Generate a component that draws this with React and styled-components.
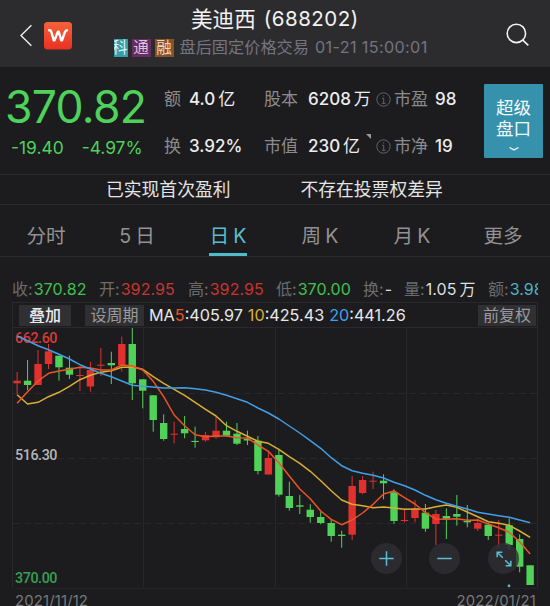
import React from "react";
import styled, { createGlobalStyle } from "styled-components";

const GlobalStyle = createGlobalStyle`
  * { box-sizing: border-box; }
  body { margin: 0; background: #1c1c1e; overflow: hidden; }
`;

const Screen = styled.main`
  width: 550px;
  height: 606px;
  overflow: hidden;
  display: flex;
  flex-direction: column;
  background: #1c1c1e;
  color: #ededef;
  font-family: Inter, "Noto Sans CJK SC", sans-serif;
  white-space: nowrap;
  font-size: 16px;
  line-height: 1;
`;

const Header = styled.header`
  height: 68px;
  flex: none;
  display: grid;
  grid-template-columns: 114px 1fr 64px;
  background: #2c2c2e;
  border-bottom: 1px solid #19191a;
`;

const HeaderLeft = styled.div`
  display: flex;
  align-items: flex-start;
  gap: 11px;
  padding: 22px 0 0 19px;
`;

const HeaderCenter = styled.div`
  display: flex;
  flex-direction: column;
`;

const Title = styled.h1`
  margin: 0;
  height: 38px;
  padding: 1px 0 0 77px;
  line-height: 36px;
  font-weight: 400;
  font-size: 21.6px;
  color: #f2f2f3;
  display: flex;
  gap: 8px;
`;

const Code = styled.span`
  font-size: 20.5px;
  letter-spacing: 0.5px;
`;

const SubTitle = styled.div`
  display: flex;
  align-items: center;
  height: 19px;
  color: #747480;
  font-size: 16.2px;
`;

const Tag = styled.span`
  width: ${(p) => p.$w}px;
  height: 18px;
  margin-right: 4px;
  display: flex;
  justify-content: ${(p) => (p.$clip ? "flex-end" : "center")};
  align-items: center;
  overflow: hidden;
  font-size: 15.5px;
  color: ${(p) => p.$fg};
  background: ${(p) => p.$bg};
`;

const Run = styled.span`
  color: ${(p) => p.$c || "inherit"};
  letter-spacing: ${(p) => p.$ls || 0}px;
  margin-left: ${(p) => p.$ml || 0}px;
`;

const SearchWrap = styled.div`
  padding: 22px 0 0 18px;
`;

const Summary = styled.section`
  height: 106px;
  flex: none;
  display: grid;
  grid-template-columns: 164px 100px 112px 108px 59px;
`;

const PriceBlock = styled.div`
  padding: 15px 0 0 5px;
  color: #4fd25b;
`;

const Price = styled.div`
  font-size: 44.5px;
  line-height: 48px;
  letter-spacing: -0.7px;
`;

const Change = styled.div`
  display: flex;
  gap: 18px;
  padding: 7px 0 0 6px;
  line-height: 20px;
  font-size: 17.4px;
`;

const StatColumn = styled.div`
  display: flex;
  flex-direction: column;
  padding-top: 19px;
  gap: 23px;
`;

const Stat = styled.div`
  display: flex;
  align-items: center;
  height: 24px;
  line-height: 24px;
  font-size: 17px;
`;

const StatLabel = styled.span`
  color: #8b8b8d;
  margin-right: ${(p) => p.$gap || 8}px;
`;

const StatValue = styled.span`
  display: flex;
  gap: 3px;
  font-weight: 500;
  font-size: 17px;
`;

const Unit = styled.span`
  font-weight: 400;
`;

const InfoSvg = styled.svg`
  margin-right: 3px;
  flex: none;
`;

const Corner = styled.i`
  align-self: flex-start;
  margin: 0 0 0 6px;
  border-style: solid;
  border-width: 0 5px 5px 0;
  border-color: transparent #9b9b9d transparent transparent;
`;

const SuperButton = styled.button`
  margin: 16px 0 0;
  width: 59px;
  height: 74px;
  border: 0;
  border-radius: 1px;
  padding: 13px 0 0;
  background: #3692ac;
  color: #f4fafc;
  font: 400 17.5px/21px Inter, "Noto Sans CJK SC", sans-serif;
  display: flex;
  flex-direction: column;
  align-items: center;
`;

const Notices = styled.section`
  height: 31px;
  flex: none;
  border-top: 1px solid #2b2b2d;
  border-bottom: 1px solid #2b2b2d;
  display: flex;
  gap: 70px;
  padding-left: 106px;
  font-size: 17.8px;
  line-height: 29px;
  color: #e4e4e6;
`;

const Tabs = styled.nav`
  height: 52px;
  flex: none;
  display: flex;
  border-bottom: 1px solid #2b2b2d;
`;

const Tab = styled.div`
  margin-left: ${(p) => p.$ml}px;
  width: ${(p) => p.$w}px;
  height: 51px;
  display: flex;
  gap: 4px;
  justify-content: center;
  line-height: 63px;
  font-size: 19.6px;
  color: ${(p) => (p.$active ? "#58bfcf" : "#929294")};
  border-bottom: 3px solid ${(p) => (p.$active ? "#4fbdcc" : "transparent")};
`;

const Quotes = styled.section`
  height: 45px;
  flex: none;
  width: 538px;
  overflow: hidden;
  display: flex;
  padding: 20px 0 0 12px;
  line-height: 24px;
`;

const Quote = styled.div`
  flex: none;
  width: ${(p) => p.$w}px;
  display: flex;
  color: #6c6c6e;
`;

const ChartPanel = styled.section`
  position: relative;
  margin-left: 12px;
  width: 526px;
  height: 286px;
  flex: none;
  border: 1px solid #29292b;
  border-bottom: 0;
`;

const ChartBar = styled.div`
  height: 25px;
  display: flex;
  align-items: center;
  border-bottom: 1px solid #29292b;
`;

const Chip = styled.span`
  width: ${(p) => p.$w}px;
  height: 21px;
  line-height: 20px;
  margin-left: ${(p) => p.$ml}px;
  text-align: center;
  background: #303033;
  color: ${(p) => (p.$bright ? "#ececee" : "#9a9a9c")};
  font-weight: ${(p) => (p.$bright ? 500 : 400)};
`;

const MaText = styled.div`
  display: flex;
  margin-left: 5px;
  width: 329px;
  font-size: 16.2px;
  color: #e8e8ea;
`;

const Plot = styled.svg`
  display: block;
`;

const AxisText = styled.text`
  font: 500 14.3px Roboto, sans-serif;
`;

const RoundButton = styled.button`
  position: absolute;
  left: ${(p) => p.$x}px;
  top: 240px;
  width: 31px;
  height: 31px;
  border: 0;
  padding: 0;
  border-radius: 50%;
  background: rgba(48, 48, 51, 0.8);
  display: flex;
  align-items: center;
  justify-content: center;
`;

const Dates = styled.footer`
  border-top: 1px solid #252527;
  margin-left: 15px;
  width: 521px;
  height: 18px;
  display: flex;
  justify-content: space-between;
  font-size: 14.9px;
  letter-spacing: 0.15px;
  line-height: 24px;
  color: #78787a;
`;

const UP = "#e0312f";
const DOWN = "#4fd257";

// Each entry: direction, body top, body bottom, high, low
const candles = [
  [1, 380.7, 383.3, 372, 394], [0, 380.7, 385, 360, 390], [1, 364, 385, 350, 385], [1, 351.3, 364, 344, 369],
  [0, 355.7, 367.3, 355.7, 380.7], [0, 367.7, 374.7, 355.7, 379], [1, 375, 376, 366.7, 391], [1, 370, 386.5, 361.7, 391.7],
  [1, 364.7, 365.7, 348, 376], [0, 363, 365.3, 351.7, 384], [1, 344, 365, 336.7, 371.7], [0, 344, 383.3, 326.5, 400],
  [0, 379.3, 390.7, 379, 408.3], [0, 395.3, 420, 395, 431.7], [0, 423, 439, 414.3, 440.7], [1, 433.7, 434.7, 421.7, 443.3],
  [0, 429, 433.3, 416, 438.3], [0, 440.9, 442, 426.7, 447.7], [1, 435, 440.3, 432, 441.7], [1, 430.7, 437.3, 417, 438.7],
  [0, 430.7, 435.7, 421.7, 436.7], [0, 433.7, 443.7, 423, 445], [0, 438.7, 440.5, 430.7, 445], [0, 440.7, 471, 436, 474.3],
  [1, 458, 474.5, 451.7, 474.5], [0, 455, 494.7, 449.3, 496.7], [0, 496, 508, 481.7, 510.7], [0, 505.3, 506.7, 495, 514],
  [0, 509.7, 517, 504.3, 522.7], [0, 517, 523, 511.7, 524.3], [0, 523, 536, 519.3, 541.7], [0, 534.7, 536, 530.7, 547.7],
  [1, 486, 534.7, 476, 540], [1, 480, 493, 476, 494.3], [1, 480.7, 481.7, 471.7, 489], [0, 480.7, 483.3, 474.3, 499.3],
  [0, 492.3, 521, 489.3, 524], [1, 520, 521, 508.3, 522.3], [1, 508.7, 518, 500, 522.3], [0, 512.7, 528.7, 504, 531.7],
  [1, 514, 524, 510, 545], [0, 516, 518.7, 508.3, 539], [0, 514, 516.7, 495, 525.7], [0, 520.9, 522.3, 505, 527.3],
  [1, 523, 528.7, 518.7, 531], [0, 524.7, 536, 522.7, 540], [1, 534.7, 535.7, 520, 547.7], [0, 525.3, 545, 518.3, 549.3],
  [0, 539, 566.7, 534.3, 572.3], [0, 565.3, 585, 565.3, 585],
];

const averages = [
  ["#d9ae35", [394.7, 404, 402.3, 396.7, 392.3, 386.3, 379.7, 375.3, 372.3, 370.7, 367.3, 367, 369.3, 376.7, 383.3, 389.3, 395.3, 402.3, 409.3, 416, 425.7, 431.3, 436.3, 441.3, 443.3, 449.3, 456.7, 463.3, 471.3, 480.7, 490.7, 500, 504.3, 505.7, 507.7, 507, 508, 509.3, 509, 509, 506.7, 505, 507.3, 512, 516.7, 521.7, 523.3, 525.3, 531, 537.3]],
  ["#ec5426", [403.3, 391.7, 381, 373.3, 371, 369.3, 367.3, 368, 370, 370, 365, 366, 370, 381.3, 396.7, 415, 425.7, 434.7, 436.7, 436, 436, 437.7, 438, 445, 451.3, 462.7, 476, 489, 498.7, 511, 519.3, 524.7, 520, 513, 504.3, 494, 491, 497.7, 504, 512.7, 519, 519.3, 518.7, 520.3, 520, 524, 527.7, 532.3, 541.7, 554]],
  ["#419fe8", [336, 340.7, 345.7, 349.7, 354.3, 359, 364.7, 369, 373.3, 376.7, 381, 385.3, 386.3, 387, 388, 388, 387.7, 388.7, 390, 392.3, 395.3, 398.7, 402.3, 408, 413, 419, 426, 433, 440.7, 448.3, 457.7, 465.7, 470.7, 473.3, 475.3, 478, 482.3, 485.7, 490, 495.3, 499.7, 503.3, 506.3, 509, 512.3, 514, 515.7, 517.3, 520, 522.7]],
];

const xAt = (i) => 17.1 + i * 10.47;

const quotes = [
  ["收", "370.82", "#42c04d", 87], ["开", "392.95", "#c93432", 89], ["高", "392.95", "#c93432", 88],
  ["低", "370.00", "#42c04d", 87], ["换", "-", "#dededf", 41], ["量", "1.05", "#dededf", 84, "万"], ["额", "3.98", "#4fb3c4", 60],
];

const tabs = [
  ["分时", "", 26, 40], ["5", "日", 55, 32], ["日", "K", 56, 38], ["周", "K", 54, 38], ["月", "K", 54, 38], ["更多", "", 52, 40],
];

function Info() {
  return (
    <InfoSvg width="15" height="15" viewBox="0 0 15 15" fill="none" stroke="#626264" strokeWidth="1">
      <circle cx="7.5" cy="7.5" r="6.7" />
      <path d="M6 6.3h1.7v5M5.8 11.3h3.8M7 3.9h1.2" />
    </InfoSvg>
  );
}

function Chart() {
  return (
    <Plot width="524" height="260" viewBox="13 328 524 260">
      <g stroke="#28282b" strokeWidth="1">
        <path d="M143.5 328V587M275.5 328V587M406.5 328V587" />
        <path d="M13 393.5H537M13 458.5H537M13 523.5H537" strokeDasharray="7 4" />
      </g>
      <AxisText x="15" y="343" fill="#d93a37" textLength="42.5">662.60</AxisText>
      <AxisText x="15" y="460" fill="#b5b5b7" textLength="42.5">516.30</AxisText>
      <AxisText x="15" y="582.5" fill="#36a055" textLength="42.5">370.00</AxisText>
      {candles.map(([up, top, bottom, high, low], i) => (
        <g key={i} fill={up ? UP : DOWN}>
          <rect x={xAt(i) - 0.5} y={high} width="1" height={low - high} />
          <rect x={xAt(i) - 3.7} y={top} width="7.4" height={bottom - top} />
        </g>
      ))}
      {averages.map(([color, ys]) => (
        <polyline key={color} points={ys.map((y, i) => `${xAt(i)},${y}`).join(" ")} fill="none" stroke={color} strokeWidth="1.5" strokeLinejoin="round" />
      ))}
      <circle cx="509" cy="585.8" r="1.4" fill="#62bfd8" />
    </Plot>
  );
}

export default function App() {
  return (
    <Screen>
      <GlobalStyle />
      <Header>
        <HeaderLeft>
          <svg width="14" height="27" viewBox="0 0 14 27" fill="none" stroke="#eeeeef" strokeWidth="1.4">
            <path d="M12.4 3.3 2 13.5l10.4 10.2" />
          </svg>
          <svg width="28" height="28" viewBox="0 0 28 28">
            <defs>
              <linearGradient id="brand" x1="0" y1="0" x2="0" y2="1">
                <stop offset="0" stopColor="#f5623b" />
                <stop offset="1" stopColor="#e93022" />
              </linearGradient>
            </defs>
            <rect width="28" height="27.5" rx="3.5" fill="url(#brand)" />
            <path d="M4.2 8.2h1.3c1 0 1.5.4 1.8 1.5l2.4 8.6h.8l3.4-8.6h.9l2.4 8.6h.8l2.9-8.2c.5-1.4 1-1.9 2.3-1.9h.6" fill="none" stroke="#fff" strokeWidth="2.4" strokeLinejoin="round" />
          </svg>
        </HeaderLeft>
        <HeaderCenter>
          <Title>美迪西 <Code>(688202)</Code></Title>
          <SubTitle>
            <Tag $w={13.5} $bg="#359eac" $fg="#d8f4f6" $clip>科</Tag>
            <Tag $w={19} $bg="#682b62" $fg="#dcc3d9">通</Tag>
            <Tag $w={19} $bg="#87512b" $fg="#efd8bf">融</Tag>
            <Run $ml={2}>盘后固定价格交易</Run>
            <Run $ml={6} $ls={0.35}>01-21 15:00:01</Run>
          </SubTitle>
        </HeaderCenter>
        <SearchWrap>
          <svg width="26" height="26" viewBox="0 0 26 26" fill="none" stroke="#f2f2f3" strokeWidth="1.6">
            <circle cx="12.4" cy="11.4" r="9.2" />
            <path d="m18.8 18.2 5.5 5.2" />
          </svg>
        </SearchWrap>
      </Header>

      <Summary>
        <PriceBlock>
          <Price>370.82</Price>
          <Change><span>-19.40</span><span>-4.97%</span></Change>
        </PriceBlock>
        <StatColumn>
          <Stat><StatLabel>额</StatLabel><StatValue>4.0<Unit>亿</Unit></StatValue></Stat>
          <Stat><StatLabel>换</StatLabel><StatValue>3.92%</StatValue></Stat>
        </StatColumn>
        <StatColumn>
          <Stat><StatLabel $gap={10}>股本</StatLabel><StatValue>6208<Unit>万</Unit></StatValue></Stat>
          <Stat><StatLabel $gap={10}>市值</StatLabel><StatValue>230<Unit>亿</Unit></StatValue><Corner /></Stat>
        </StatColumn>
        <StatColumn>
          <Stat><Info /><StatLabel $gap={7}>市盈</StatLabel><StatValue>98</StatValue></Stat>
          <Stat><Info /><StatLabel $gap={7}>市净</StatLabel><StatValue>19</StatValue></Stat>
        </StatColumn>
        <SuperButton>
          <span>超级</span>
          <span>盘口</span>
          <svg width="12" height="14" viewBox="0 0 12 14" fill="none" stroke="#e6f5f8" strokeWidth="1.4">
            <path d="m1.5 8.5 4.5 2.4 4.5-2.4" />
          </svg>
        </SuperButton>
      </Summary>

      <Notices><span>已实现首次盈利</span><span>不存在投票权差异</span></Notices>

      <Tabs>
        {tabs.map(([a, b, ml, w], i) => (
          <Tab key={a} $ml={ml} $w={w} $active={i === 2}><span>{a}</span>{b && <span>{b}</span>}</Tab>
        ))}
      </Tabs>

      <Quotes>
        {quotes.map(([label, value, color, w, unit]) => (
          <Quote key={label} $w={w}>{label}:<Run $c={color} $ml={1} $ls={0.1}>{value}</Run>{unit && <Run $ml={3} $c={color}>{unit}</Run>}</Quote>
        ))}
      </Quotes>

      <ChartPanel>
        <ChartBar>
          <Chip $w={52} $ml={6} $bright>叠加</Chip>
          <Chip $w={59} $ml={14}>设周期</Chip>
          <MaText>
            MA<Run $c="#ec5426">5</Run>:405.97
            <Run $c="#d9ae35" $ml={5}>10</Run>:425.43
            <Run $c="#419fe8" $ml={5}>20</Run>:441.26
          </MaText>
          <Chip $w={58} $ml={0}>前复权</Chip>
        </ChartBar>
        <Chart />
        <RoundButton $x={358} aria-label="zoom in">
          <svg width="15" height="15" viewBox="0 0 15 15" stroke="#58bfd3" strokeWidth="1.5"><path d="M7.5 .3v14.4M.3 7.5h14.4" /></svg>
        </RoundButton>
        <RoundButton $x={416} aria-label="zoom out">
          <svg width="15" height="15" viewBox="0 0 15 15" stroke="#58bfd3" strokeWidth="1.5"><path d="M.3 7.5h14.4" /></svg>
        </RoundButton>
        <RoundButton $x={475} aria-label="expand">
          <svg width="16" height="16" viewBox="0 0 16 16" fill="none" stroke="#58bfd3" strokeWidth="1.5"><path d="M6.3 1.2H1.2v5.1M1.2 1.2l5.6 5.6M9.7 14.8h5.1V9.7M14.8 14.8 9.2 9.2" /></svg>
        </RoundButton>
      </ChartPanel>
      <Dates><span>2021/11/12</span><span>2022/01/21</span></Dates>
    </Screen>
  );
}
